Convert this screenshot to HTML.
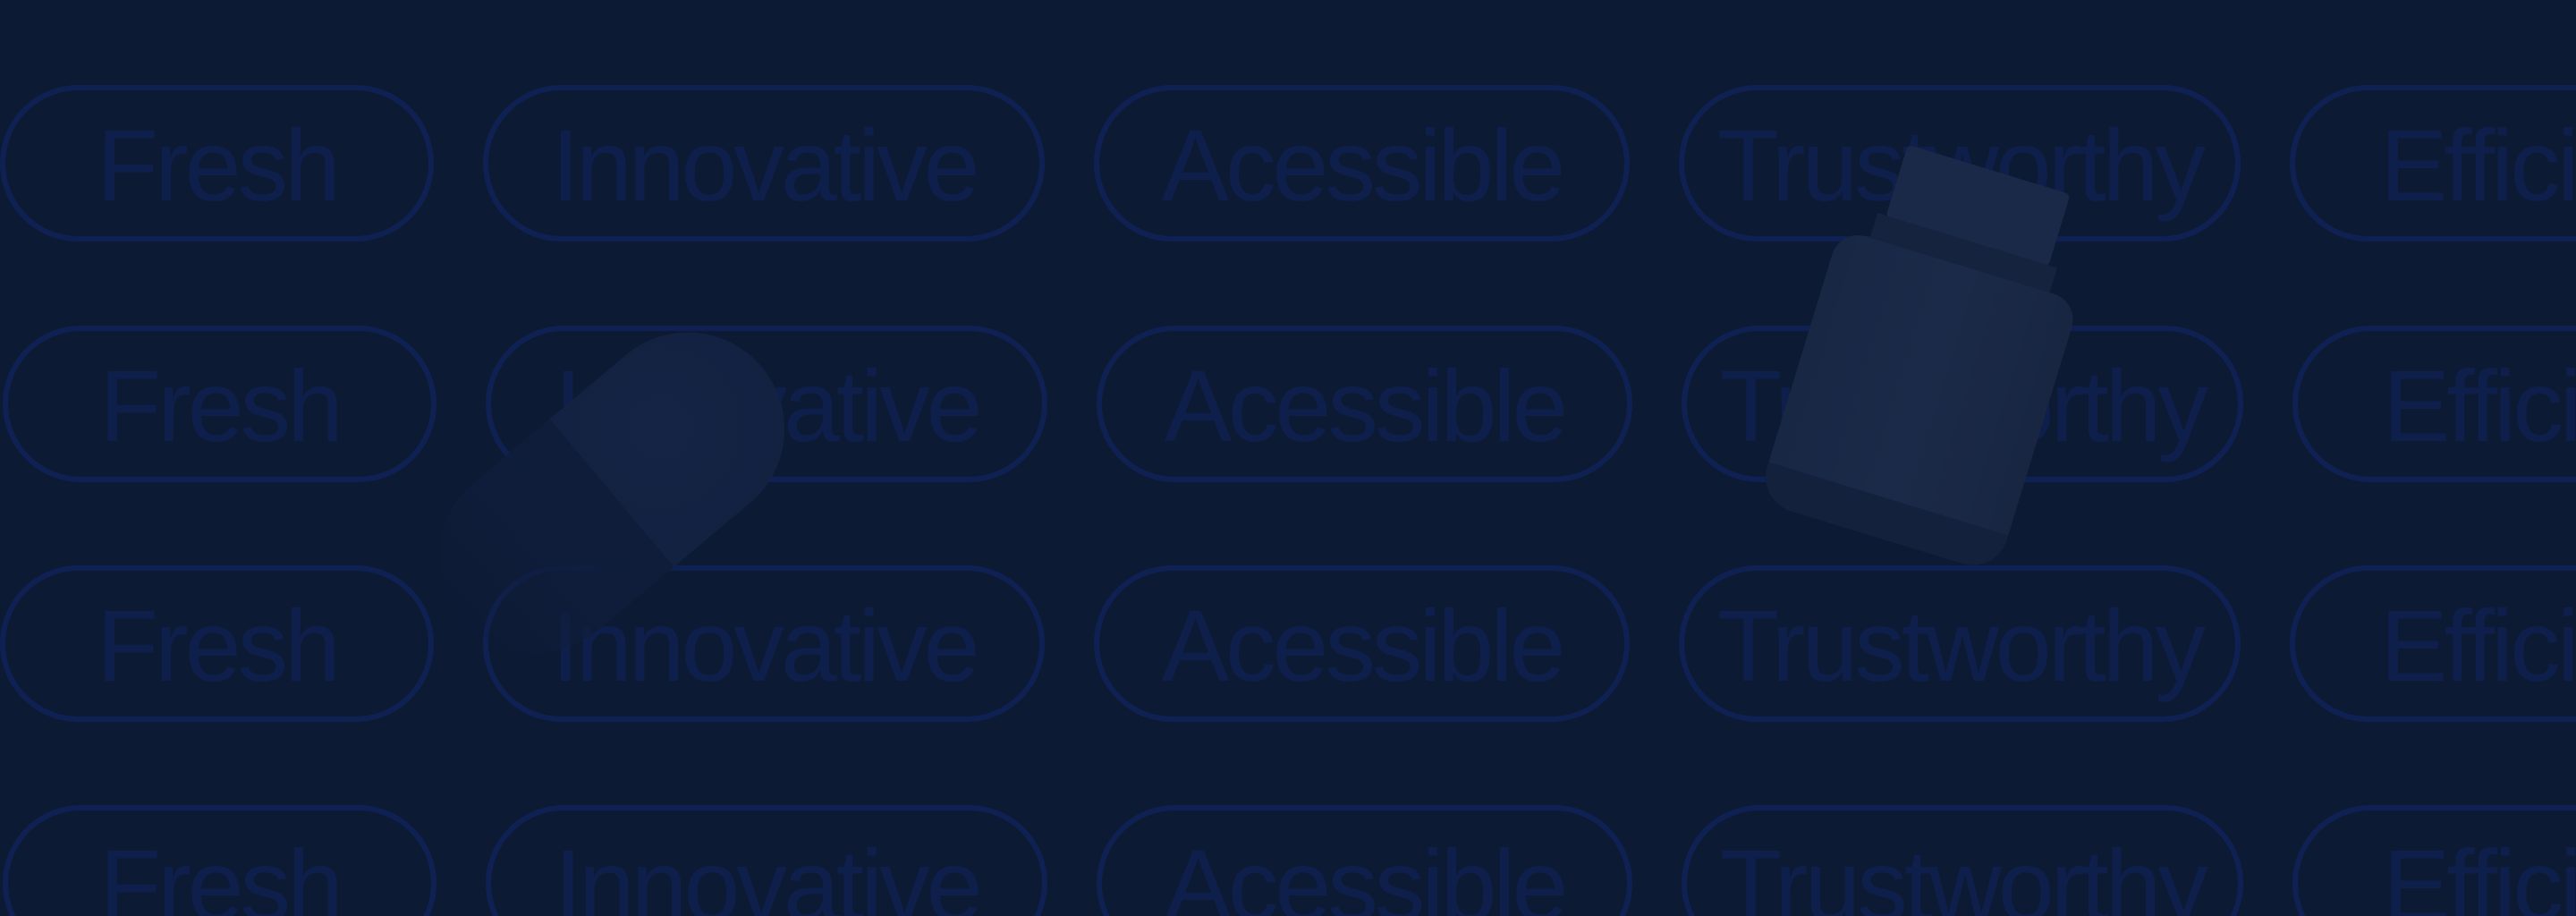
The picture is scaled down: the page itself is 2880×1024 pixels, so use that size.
<!DOCTYPE html>
<html><head><meta charset="utf-8"><style>
html,body{margin:0;padding:0}
body{width:2880px;height:1024px;overflow:hidden;background:#0d1a34;position:relative;font-family:"Liberation Sans",sans-serif}
.row{position:absolute;left:0;width:2880px;height:175px;display:flex;gap:55px;white-space:nowrap;overflow:hidden}
.p{box-sizing:border-box;height:175px;border:6px solid #0f2152;border-radius:88px;display:flex;align-items:center;justify-content:center;color:#0f1f4c;font-size:113px;letter-spacing:-4px;flex:none;padding-top:4px}
.w1{width:485px}.w2{width:628px}.w3{width:599px}.w4{width:628px}.w5{width:628px;justify-content:flex-start;padding-left:95px}
.cap{position:absolute;left:465px;top:443px;width:438px;height:216px;border-radius:108px;transform:rotate(-40deg);overflow:hidden}
.cap .a{position:absolute;left:0;top:0;width:219px;height:216px;background:linear-gradient(90deg,rgba(15,29,58,0.1),rgba(15,29,59,0.8) 50%,#0f1d3a)}
.cap .b{position:absolute;left:219px;top:0;width:219px;height:216px;background:radial-gradient(circle at 40% 40%,#152444,#122140)}
.bot{position:absolute;left:2021px;top:180px;width:280px;height:430px;transform:rotate(17deg)}
.bot .c{position:absolute;left:45px;top:0;width:190px;height:85px;background:#1a2947;border-radius:6px}
.bot .n{position:absolute;left:35px;top:83px;width:210px;height:30px;background:#16233f}
.bot .bd{position:absolute;left:0;top:112px;width:280px;height:318px;background:linear-gradient(90deg,#172744,#1b2a48 50%,#182642);border-radius:30px 30px 40px 40px}
.bot .lb{position:absolute;left:0;top:385px;width:280px;height:45px;background:#13213d;border-radius:0 0 40px 40px}
</style></head><body>
<div class="row" style="top:95px">
<div class="p w1">Fresh</div><div class="p w2">Innovative</div><div class="p w3">Acessible</div><div class="p w4">Trustworthy</div><div class="p w5">Efficient</div></div>
<div class="row" style="top:364px;left:3px;width:2877px">
<div class="p w1">Fresh</div><div class="p w2">Innovative</div><div class="p w3">Acessible</div><div class="p w4">Trustworthy</div><div class="p w5">Efficient</div></div>
<div class="row" style="top:632px">
<div class="p w1">Fresh</div><div class="p w2">Innovative</div><div class="p w3">Acessible</div><div class="p w4">Trustworthy</div><div class="p w5">Efficient</div></div>
<div class="row" style="top:900px;left:3px;width:2877px;height:124px;align-items:flex-start">
<div class="p w1">Fresh</div><div class="p w2">Innovative</div><div class="p w3">Acessible</div><div class="p w4">Trustworthy</div><div class="p w5">Efficient</div></div>
<div class="cap"><div class="a"></div><div class="b"></div></div>
<div class="bot"><div class="c"></div><div class="n"></div><div class="bd"></div><div class="lb"></div></div>
</body></html>
